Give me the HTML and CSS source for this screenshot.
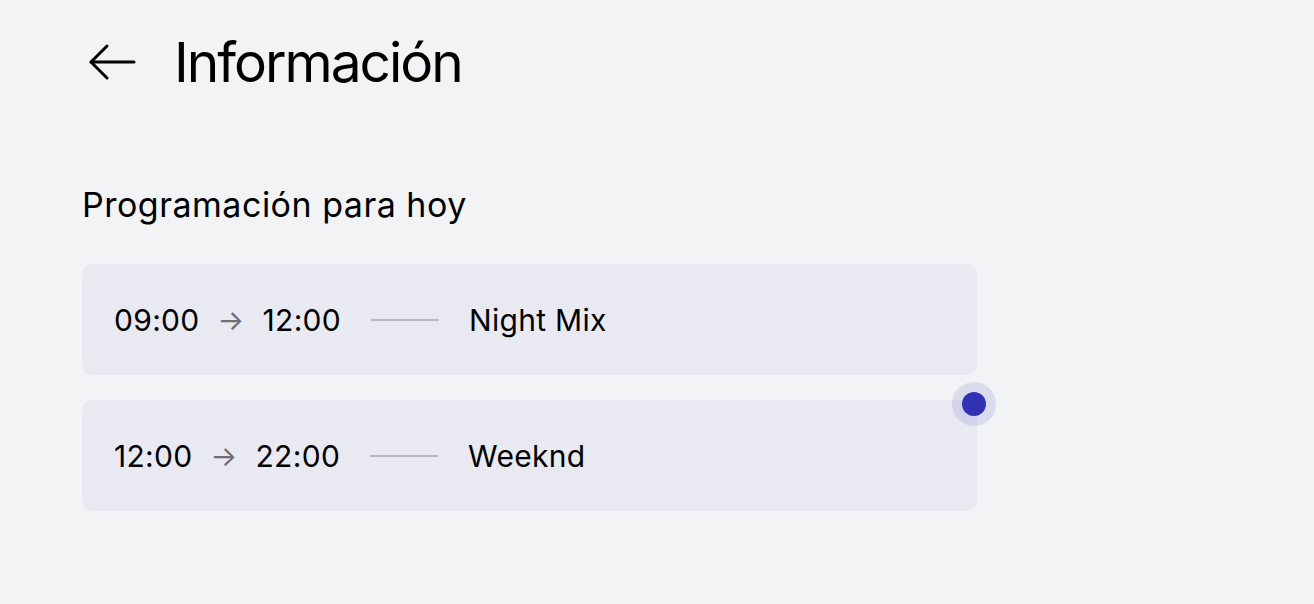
FILE: index.html
```html
<!DOCTYPE html>
<html lang="es">
<head>
<meta charset="utf-8">
<title>Información</title>
<link rel="stylesheet" href="styles.css">
</head>
<body>
<main class="page">
  <header class="topbar">
    <button class="back" aria-label="Volver">
      <svg width="48" height="38" viewBox="0 0 48 38" fill="none" stroke="#000" stroke-width="3" stroke-linecap="round" stroke-linejoin="round">
        <path d="M46 19H3"/>
        <path d="M19 3L3 19L19 35"/>
      </svg>
    </button>
    <h1 class="title">Información</h1>
  </header>
  <section class="schedule">
    <h2 class="subtitle">Programación para hoy</h2>
    <ul class="list">
      <li class="item">
        <span class="time">09:00</span>
        <span class="to">→</span>
        <span class="time">12:00</span>
        <span class="rule"></span>
        <span class="name">Night Mix</span>
      </li>
      <li class="item current">
        <span class="time">12:00</span>
        <span class="to">→</span>
        <span class="time">22:00</span>
        <span class="rule"></span>
        <span class="name">Weeknd</span>
        <span class="live"></span>
      </li>
    </ul>
  </section>
</main>
</body>
</html>
```
FILE: styles.css
```css
* { box-sizing: border-box; }
html, body { margin: 0; padding: 0; }
body {
  background: #f2f3f5;
  font-family: Inter, "Noto Sans", sans-serif;
  color: #000;
}
.page {
  padding: 22px 0 0 82px;
  width: 977px;
}
.topbar {
  display: flex;
  align-items: center;
  gap: 38px;
  height: 80px;
}
.back {
  border: 0;
  background: none;
  padding: 0;
  margin-left: 6px;
  display: flex;
}
.title {
  margin: 0;
  font-size: 55px;
  font-weight: 400;
  letter-spacing: -2px;
}
.schedule { margin-top: 82px; }
.subtitle {
  margin: 0 0 38px 0;
  font-size: 34px;
  font-weight: 400;
  letter-spacing: 0.5px;
  line-height: 42px;
}
.list {
  list-style: none;
  margin: 0;
  padding: 0;
  display: flex;
  flex-direction: column;
  gap: 25px;
}
.item {
  position: relative;
  display: flex;
  align-items: center;
  height: 111px;
  padding: 0 32px;
  background: #e9e9f2;
  border-radius: 10px;
  font-size: 30px;
  letter-spacing: 0.3px;
  gap: 18px;
}
.to { color: #6e6e74; font-size: 28px; }
.rule {
  width: 68px;
  height: 2px;
  background: #b8b8be;
  margin: 0 12px;
}
.live {
  position: absolute;
  top: -18px;
  right: -19px;
  width: 44px;
  height: 44px;
  border-radius: 50%;
  background: rgba(51, 51, 179, 0.12);
  display: flex;
  align-items: center;
  justify-content: center;
}
.live::after {
  content: "";
  width: 24px;
  height: 24px;
  border-radius: 50%;
  background: #3232b4;
}
```
